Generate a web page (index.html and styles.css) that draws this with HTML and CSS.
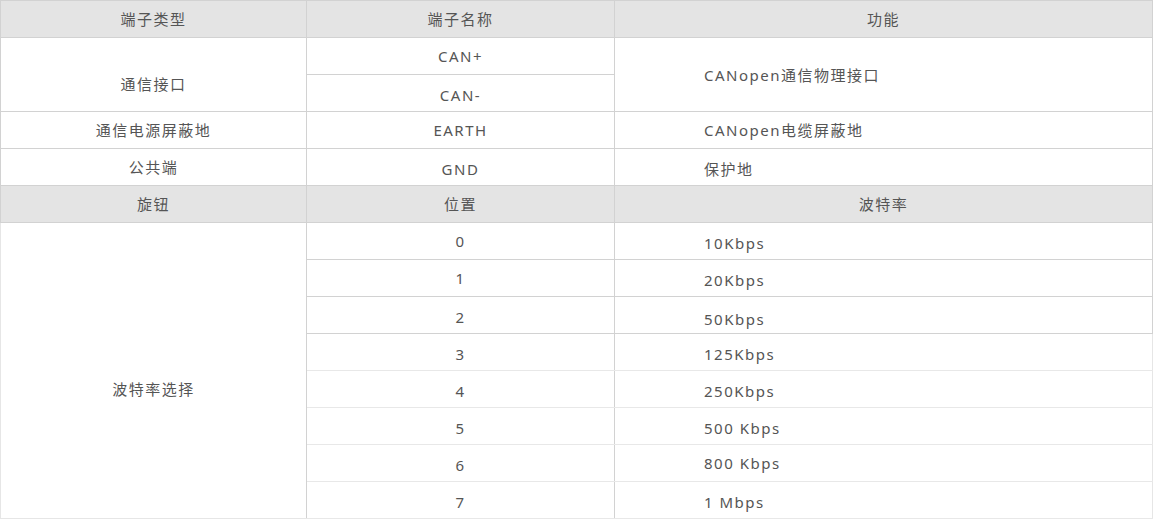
FILE: index.html
```html
<!DOCTYPE html>
<html lang="zh-CN">
<head>
<meta charset="utf-8">
<title>CANopen 端子说明</title>
<link rel="stylesheet" href="styles.css">
</head>
<body>
<table class="spec">
  <colgroup>
    <col class="c1">
    <col class="c2">
    <col class="c3">
  </colgroup>
  <tbody>
    <tr class="head">
      <th>端子类型</th>
      <th>端子名称</th>
      <th>功能</th>
    </tr>
    <tr>
      <td rowspan="2" class="span low">通信接口</td>
      <td>CAN+</td>
      <td rowspan="2" class="span fn">CANopen通信物理接口</td>
    </tr>
    <tr>
      <td class="low-s">CAN-</td>
    </tr>
    <tr>
      <td>通信电源屏蔽地</td>
      <td>EARTH</td>
      <td class="fn">CANopen电缆屏蔽地</td>
    </tr>
    <tr>
      <td>公共端</td>
      <td class="low-s">GND</td>
      <td class="fn low-s">保护地</td>
    </tr>
    <tr class="head">
      <th>旋钮</th>
      <th>位置</th>
      <th>波特率</th>
    </tr>
    <tr>
      <td rowspan="8" class="span knob">波特率选择</td>
      <td>0</td>
      <td class="fn low-s">10Kbps</td>
    </tr>
    <tr><td>1</td><td class="fn low-s">20Kbps</td></tr>
    <tr><td class="low-s">2</td><td class="fn low-m">50Kbps</td></tr>
    <tr class="light"><td class="low-s">3</td><td class="fn low-s">125Kbps</td></tr>
    <tr class="light"><td class="low-s">4</td><td class="fn low-s">250Kbps</td></tr>
    <tr class="light"><td class="low-s">5</td><td class="fn low-s">500 Kbps</td></tr>
    <tr class="light"><td class="low-s">6</td><td class="fn">800 Kbps</td></tr>
    <tr class="light"><td class="low-s">7</td><td class="fn low-s">1 Mbps</td></tr>
  </tbody>
</table>
</body>
</html>
```

FILE: styles.css
```css
html, body {
  margin: 0;
  padding: 0;
  background: #ffffff;
}

.spec {
  border-collapse: collapse;
  table-layout: fixed;
  width: 1152px;
  font-family: "Noto Sans", "Noto Sans CJK SC", sans-serif;
  font-size: 15px;
  letter-spacing: 1.5px;
  color: #555555;
}

.c1 { width: 306px; }
.c2 { width: 308px; }
.c3 { width: 538px; }

.spec th,
.spec td {
  height: 36px;
  padding: 0;
  border: 1px solid #d2d2d2;
  text-align: center;
  vertical-align: middle;
  font-weight: normal;
  line-height: 20px;
}

.spec tr.head th {
  background: #e4e4e4;
}

.spec td.span {
  height: auto;
}

.spec td.fn {
  text-align: left;
  padding-left: 89px;
}

.spec td.low {
  padding-top: 18px;
}

.spec td.low-s {
  padding-top: 4px;
  height: 32px;
}

.spec td.low-m {
  padding-top: 7px;
  height: 29px;
}

.spec td.knob {
  padding-top: 36px;
  border-left-color: #e6e6e6;
  border-bottom-color: #e6e6e6;
}

.spec tr.light td {
  border-top-color: #e8e8e8;
  border-bottom-color: #e8e8e8;
}

.spec tr.light td:first-child,
.spec tr.light td.fn {
  border-left-color: #cccccc;
}

.spec tr.light td.fn {
  border-right-color: #e6e6e6;
}
```
